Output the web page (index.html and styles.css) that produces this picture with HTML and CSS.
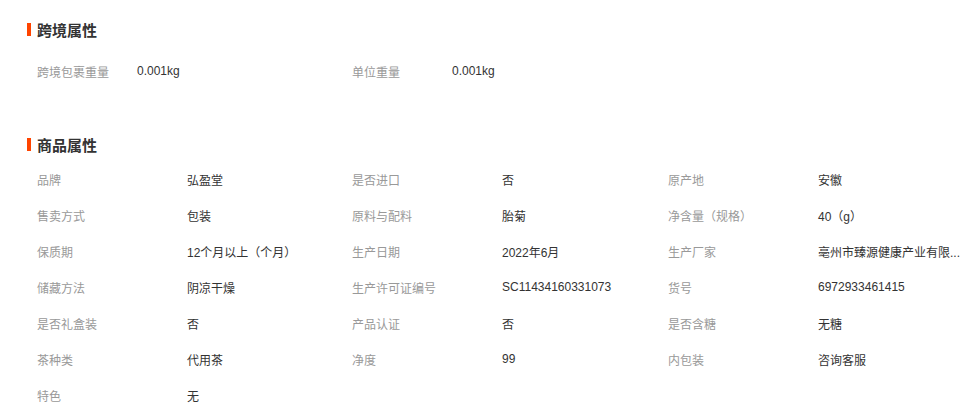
FILE: index.html
```html
<!DOCTYPE html>
<html lang="zh-CN">
<head>
  <meta charset="UTF-8">
  <title>商品属性</title>
  <link rel="stylesheet" href="styles.css">
</head>
<body>
  <div class="attr-section cross">
    <h3 class="section-title">跨境属性</h3>
    <ul class="attr-list cross-list">
      <li><span class="label">跨境包裹重量</span><span class="value">0.001kg</span></li>
      <li><span class="label">单位重量</span><span class="value">0.001kg</span></li>
    </ul>
  </div>

  <div class="attr-section">
    <h3 class="section-title">商品属性</h3>
    <ul class="attr-list goods-list">
      <li><span class="label">品牌</span><span class="value">弘盈堂</span></li>
      <li><span class="label">是否进口</span><span class="value">否</span></li>
      <li><span class="label">原产地</span><span class="value">安徽</span></li>
      <li><span class="label">售卖方式</span><span class="value">包装</span></li>
      <li><span class="label">原料与配料</span><span class="value">胎菊</span></li>
      <li><span class="label">净含量（规格）</span><span class="value">40（g）</span></li>
      <li><span class="label">保质期</span><span class="value">12个月以上（个月）</span></li>
      <li><span class="label">生产日期</span><span class="value">2022年6月</span></li>
      <li><span class="label">生产厂家</span><span class="value" title="亳州市臻源健康产业有限公司">亳州市臻源健康产业有限...</span></li>
      <li><span class="label">储藏方法</span><span class="value">阴凉干燥</span></li>
      <li><span class="label">生产许可证编号</span><span class="value">SC11434160331073</span></li>
      <li><span class="label">货号</span><span class="value">6972933461415</span></li>
      <li><span class="label">是否礼盒装</span><span class="value">否</span></li>
      <li><span class="label">产品认证</span><span class="value">否</span></li>
      <li><span class="label">是否含糖</span><span class="value">无糖</span></li>
      <li><span class="label">茶种类</span><span class="value">代用茶</span></li>
      <li><span class="label">净度</span><span class="value">99</span></li>
      <li><span class="label">内包装</span><span class="value">咨询客服</span></li>
      <li><span class="label">特色</span><span class="value">无</span></li>
    </ul>
  </div>
</body>
</html>
```

FILE: styles.css
```css
body {
  margin: 0;
  background-color: #fff;
  color: #333;
  font-family: "Liberation Sans", "Noto Sans CJK SC", sans-serif;
  font-size: 12px;
  overflow: hidden;
}

.attr-section {
  padding-left: 27px;
}

.attr-section.cross {
  padding-top: 19px;
  margin-bottom: 45px;
}

.section-title {
  display: flex;
  align-items: center;
  height: 20px;
  margin: 0;
  font-size: 15px;
  font-weight: bold;
  color: #333;
}

.section-title::before {
  content: "";
  width: 4px;
  height: 13px;
  margin-right: 6px;
  background-color: #ff4400;
}

.attr-list {
  list-style: none;
  margin: 0;
  padding: 0 0 0 10px;
  display: grid;
  grid-template-columns: 315px 316px 1fr;
}

.cross-list {
  margin-top: 14px;
}

.goods-list {
  margin-top: 7px;
}

.attr-list li {
  display: flex;
  align-items: center;
  height: 36px;
  min-width: 0;
}

.label {
  flex: 0 0 150px;
  color: #999;
}

.cross-list .label {
  flex-basis: 100px;
}

.value {
  flex: 1;
  min-width: 0;
  white-space: nowrap;
  color: #333;
}
```
